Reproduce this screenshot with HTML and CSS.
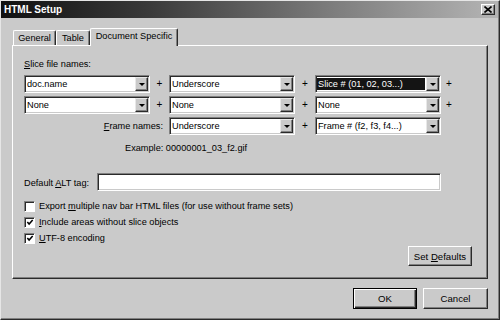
FILE: index.html
```html
<!DOCTYPE html>
<html>
<head>
<meta charset="utf-8">
<title>HTML Setup</title>
<link rel="stylesheet" href="styles.css">
</head>
<body>
<div class="window">
  <div class="titlebar">
    <span class="title">HTML Setup</span>
    <span class="close"><svg width="8" height="7" viewBox="0 0 8 7"><path d="M0.5 0.5 L7.5 6.5 M0.5 6.5 L7.5 0.5" stroke="#000" stroke-width="1.6" fill="none"/></svg></span>
  </div>
  <div class="body">
    <div class="tabs">
      <div class="tab tab-general">General</div>
      <div class="tab tab-table">Table</div>
      <div class="tab tab-doc active">Document Specific</div>
    </div>
    <div class="panel">
      <div class="caption"><u>S</u>lice file names:</div>
      <div class="grid">
        <div class="combo"><span class="value">doc.name</span><span class="arrow"></span></div>
        <div class="plus">+</div>
        <div class="combo"><span class="value">Underscore</span><span class="arrow"></span></div>
        <div class="plus">+</div>
        <div class="combo"><span class="value selected">Slice # (01, 02, 03...)</span><span class="arrow"></span></div>
        <div class="plus">+</div>

        <div class="combo"><span class="value">None</span><span class="arrow"></span></div>
        <div class="plus">+</div>
        <div class="combo"><span class="value">None</span><span class="arrow"></span></div>
        <div class="plus">+</div>
        <div class="combo"><span class="value">None</span><span class="arrow"></span></div>
        <div class="plus">+</div>

        <div class="frame-label"><span><u>F</u>rame names:</span></div>
        <div class="combo"><span class="value">Underscore</span><span class="arrow"></span></div>
        <div class="plus">+</div>
        <div class="combo"><span class="value">Frame # (f2, f3, f4...)</span><span class="arrow"></span></div>
      </div>
      <div class="example">Example: 00000001_03_f2.gif</div>
      <div class="alt-row">
        <span class="alt-label">Default <u>A</u>LT tag:</span>
        <span class="textbox"></span>
      </div>
      <div class="checks">
        <div class="check"><span class="box"></span><span>Export <u>m</u>ultiple nav bar HTML files (for use without frame sets)</span></div>
        <div class="check"><span class="box"><svg width="9" height="9" viewBox="0 0 9 9"><path d="M1.5 4 L3.5 6.3 L7.5 1.8" stroke="#000" stroke-width="1.7" fill="none"/></svg></span><span><u>I</u>nclude areas without slice objects</span></div>
        <div class="check"><span class="box"><svg width="9" height="9" viewBox="0 0 9 9"><path d="M1.5 4 L3.5 6.3 L7.5 1.8" stroke="#000" stroke-width="1.7" fill="none"/></svg></span><span><u>U</u>TF-8 encoding</span></div>
      </div>
      <div class="defaults-row">
        <span class="btn btn-defaults"><span>Set <u>D</u>efaults</span></span>
      </div>
    </div>
    <div class="footer">
      <span class="btn btn-ok"><span>OK</span></span>
      <span class="btn btn-cancel"><span>Cancel</span></span>
    </div>
  </div>
</div>
</body>
</html>
```
FILE: styles.css
```css
* { box-sizing: border-box; }
html, body { margin: 0; padding: 0; }
body {
  width: 500px;
  height: 320px;
  overflow: hidden;
  background: #cacaca;
  font-family: "Liberation Sans", Arial, sans-serif;
  font-size: 9.2px;
  color: #000;
}
u { text-decoration: underline; text-underline-offset: 1px; }

.window {
  width: 500px;
  height: 320px;
  background: #cacaca;
  border: 1px solid;
  border-color: #e6e6e6 #2a2a2a #2a2a2a #e6e6e6;
  box-shadow: inset -1px -1px #808080;
  padding: 0 1px 1px 0;
  display: flex;
  flex-direction: column;
}

.titlebar {
  height: 17px;
  display: flex;
  align-items: center;
  justify-content: space-between;
  padding: 0 3px 0 3px;
  background: linear-gradient(to right, #101010 0%, #3a3a3a 30%, #7a7a7a 65%, #b4b4b4 100%);
}
.title {
  color: #fff;
  font-weight: bold;
  font-size: 10px;
}
.close {
  width: 14px;
  height: 11px;
  background: #cacaca;
  border: 1px solid;
  border-color: #fff #2a2a2a #2a2a2a #fff;
  box-shadow: inset -1px -1px #808080;
  display: flex;
  align-items: center;
  justify-content: center;
}

.body {
  flex: 1;
  display: flex;
  flex-direction: column;
  padding: 10px 10px 0 11px;
}

.tabs {
  height: 17px;
  display: flex;
  align-items: flex-end;
  padding-left: 1px;
}
.tab {
  height: 15px;
  display: flex;
  align-items: center;
  justify-content: center;
  border: 1px solid;
  border-bottom: none;
  border-color: #fff #2a2a2a #2a2a2a #fff;
  border-radius: 2px 2px 0 0;
  box-shadow: inset -1px 0 #808080;
  padding-bottom: 1px;
}
.tab-general { width: 43px; }
.tab-table { width: 34px; }
.tab-doc { width: 88px; }
.tab.active {
  height: 18px;
  margin-bottom: -1px;
  background: #cacaca;
  position: relative;
  z-index: 1;
  padding-bottom: 3px;
}

.panel {
  height: 234px;
  display: flex;
  flex-direction: column;
  border: 1px solid;
  border-color: #fff #2a2a2a #2a2a2a #fff;
  box-shadow: inset -1px -1px #808080;
  padding: 12px 15px 14px 11px;
}

.caption { height: 12px; line-height: 12px; }

.grid {
  margin-top: 5px;
  display: grid;
  grid-template-columns: 126px 19px 126px 20px 126px 16px;
  grid-auto-rows: 18px;
  row-gap: 3px;
}
.plus {
  display: flex;
  align-items: center;
  justify-content: center;
  font-size: 10px;
  padding-bottom: 2px;
}
.frame-label {
  grid-column: 1 / 3;
  justify-self: end;
  align-self: center;
  padding-right: 6px;
}

.combo {
  display: flex;
  align-items: stretch;
  background: #fff;
  border: 1px solid;
  border-color: #808080 #fff #fff #808080;
  box-shadow: inset 1px 1px #2a2a2a, inset -1px -1px #cacaca;
  padding: 1px;
}
.value {
  flex: 1;
  display: flex;
  align-items: center;
  padding-left: 1px;
  margin: 1px 1px 1px 0;
  white-space: nowrap;
}
.value.selected {
  background: #141414;
  color: #fff;
}
.arrow {
  width: 13px;
  background: #cacaca;
  border: 1px solid;
  border-color: #e8e8e8 #2a2a2a #2a2a2a #e8e8e8;
  box-shadow: inset -1px -1px #808080;
  display: flex;
  align-items: center;
  justify-content: center;
}
.arrow::after {
  content: "";
  width: 0;
  height: 0;
  border-left: 3px solid transparent;
  border-right: 3px solid transparent;
  border-top: 3px solid #000;
}

.example {
  margin-top: 7px;
  height: 12px;
  line-height: 12px;
  padding-left: 101px;
}

.alt-row {
  margin-top: 19px;
  display: flex;
  align-items: center;
  height: 18px;
}
.alt-label { width: 73px; padding-top: 1px; }
.textbox {
  width: 344px;
  height: 18px;
  background: #fff;
  border: 1px solid;
  border-color: #808080 #fff #fff #808080;
  box-shadow: inset 1px 1px #2a2a2a, inset -1px -1px #cacaca;
}

.checks { margin-top: 7px; display: flex; flex-direction: column; }
.check {
  height: 16px;
  display: flex;
  align-items: center;
  gap: 4px;
}
.box {
  width: 11px;
  height: 11px;
  background: #fff;
  border: 1px solid;
  border-color: #808080 #fff #fff #808080;
  box-shadow: inset 1px 1px #2a2a2a;
  display: flex;
  align-items: center;
  justify-content: center;
  padding: 1px 0 0 1px;
}

.defaults-row {
  margin-top: auto;
  display: flex;
  justify-content: flex-end;
}

.btn {
  display: flex;
  align-items: center;
  justify-content: center;
  height: 21px;
  background: #cacaca;
  border: 1px solid;
  border-color: #fff #2a2a2a #2a2a2a #fff;
  box-shadow: inset -1px -1px #808080;
  font-size: 9.6px;
}
.btn-defaults { width: 64px; height: 20px; }
.btn-ok {
  width: 64px;
  border: 1px solid #000;
  box-shadow: inset 1px 1px #fff, inset -1px -1px #2a2a2a, inset -2px -2px #808080;
}
.btn-cancel { width: 65px; }

.footer {
  margin-top: 9px;
  display: flex;
  justify-content: flex-end;
  gap: 6px;
}
```
